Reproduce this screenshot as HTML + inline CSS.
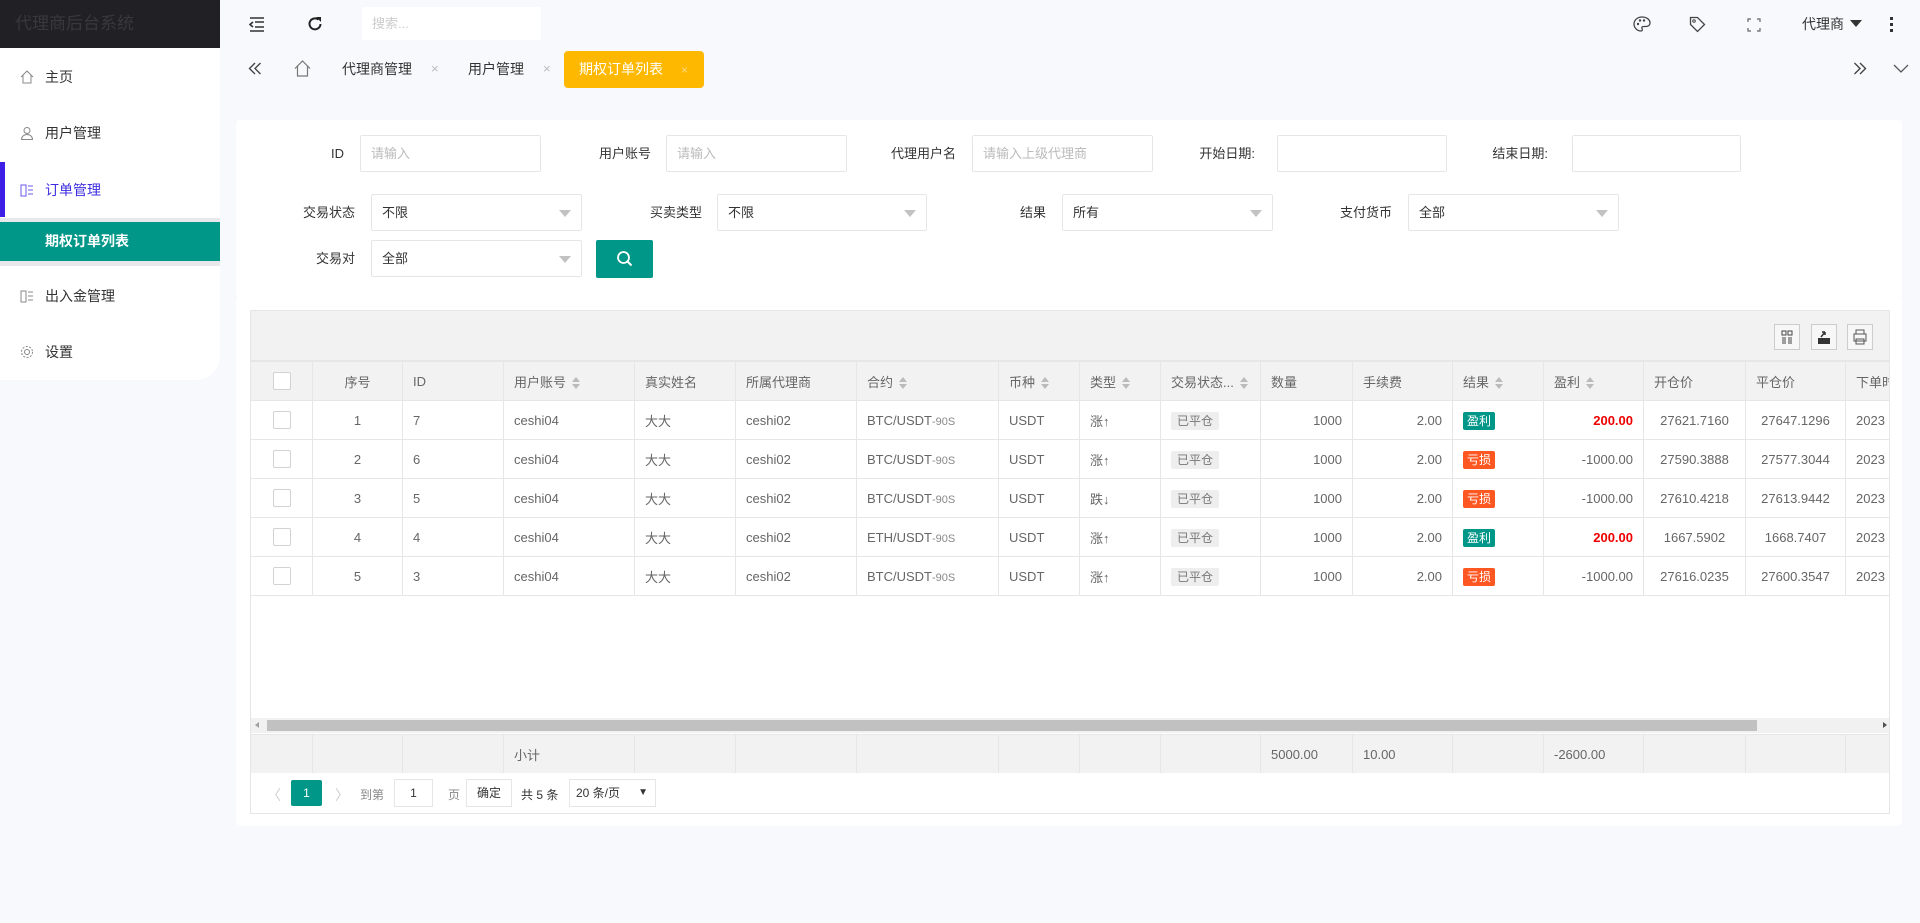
<!DOCTYPE html>
<html><head><meta charset="utf-8"><style>
*{box-sizing:border-box;margin:0;padding:0}
body{width:1920px;height:923px;overflow:hidden;background:#f8f9fc;font-family:"Liberation Sans","Noto Sans CJK SC",sans-serif;font-size:14px;color:#333;position:relative}
.abs{position:absolute}
.side{left:0;top:0;width:220px;height:380px;background:#fff;border-bottom-right-radius:24px}
.logo{left:0;top:0;width:220px;height:48px;background:#212025;color:#38383d;font-size:17px;line-height:48px;padding-left:15px}
.mi{left:0;width:220px;height:40px;line-height:40px;padding-left:45px;color:#333;font-size:14px}
.mi svg{position:absolute;left:20px;top:13px}
.inp{background:#fff;border:1px solid #e6e6e6;border-radius:2px;height:37px;line-height:35px;padding-left:10px;color:#bbb;font-size:13px}
.sel{color:#333}
.sel:after{content:"";position:absolute;right:10px;top:15px;border:6px solid transparent;border-top:7px solid #c2c2c2}
.lbl{text-align:right;color:#333;font-size:13px;line-height:37px}
table{border-collapse:collapse;table-layout:fixed}
td{border:1px solid #e6e6e6;height:39px;padding:0 10px;color:#666;font-size:13px;white-space:nowrap;overflow:hidden}
.hd td{background:#f2f2f2;color:#666}
.c{text-align:center}.r{text-align:right}
.cb{display:inline-block;width:18px;height:18px;border:1px solid #d2d2d2;background:#fff;border-radius:2px;vertical-align:middle}
.st{background:#eee;color:#777;font-size:12px;padding:2px 6px;border-radius:2px}
.bg{color:#fff;font-size:12px;padding:2px 4px;border-radius:2px}
.sort{display:inline-block;margin-left:6px;vertical-align:middle;width:8px;height:12px;position:relative}
.sort:before{content:"";position:absolute;left:0;top:0;border:4px solid transparent;border-bottom:5px solid #bbb;border-top:0}
.sort:after{content:"";position:absolute;left:0;top:7px;border:4px solid transparent;border-top:5px solid #bbb;border-bottom:0}
.red{color:#e00;font-weight:bold}
.tb{width:26px;height:26px;border:1px solid #ccc;background:#f7f7f7}
</style></head><body>
<div class="abs side"></div>
<div class="abs logo">代理商后台系统</div>
<div class="abs mi" style="top:57px"><svg width="14" height="14" viewBox="0 0 14 14"><path d="M1 7L7 1l6 6M3 5v8h8V5" fill="none" stroke="#888"/></svg>主页</div>
<div class="abs mi" style="top:113px"><svg width="14" height="14" viewBox="0 0 14 14"><circle cx="7" cy="4.5" r="3" fill="none" stroke="#888"/><path d="M1.5 13.5c0-3 2.5-5 5.5-5s5.5 2 5.5 5z" fill="none" stroke="#888"/></svg>用户管理</div>
<div class="abs" style="left:0;top:162px;width:5px;height:55px;background:#3d1ee6"></div>
<div class="abs mi" style="top:170px;color:#3d2ce0"><svg width="14" height="14" viewBox="0 0 14 14"><path d="M1 2h5v11H1zM8 3h5M8 7h5M8 11h5" fill="none" stroke="#6a5ae8"/></svg>订单管理</div>
<div class="abs" style="left:0;top:218px;width:220px;height:48px;background:#e8e8ec"></div>
<div class="abs mi" style="top:222px;height:39px;line-height:39px;background:#009688;color:#fff;font-weight:bold">期权订单列表</div>
<div class="abs mi" style="top:276px"><svg width="14" height="14" viewBox="0 0 14 14"><path d="M1 2h5v11H1zM8 3h5M8 7h5M8 11h5" fill="none" stroke="#888"/></svg>出入金管理</div>
<div class="abs mi" style="top:332px"><svg width="14" height="14" viewBox="0 0 14 14"><circle cx="7" cy="7" r="2.5" fill="none" stroke="#888"/><circle cx="7" cy="7" r="5.5" fill="none" stroke="#888" stroke-dasharray="2 1.5"/></svg>设置</div>

<svg class="abs" style="left:249px;top:17px" width="16" height="15" viewBox="0 0 16 15"><path d="M1 1h14M6 5h9M6 10h9M1 14h14M4 5L1 7.5 4 10" fill="none" stroke="#333" stroke-width="1.6"/></svg>
<svg class="abs" style="left:307px;top:16px" width="16" height="16" viewBox="0 0 16 16"><path d="M13.5 8A5.5 5.5 0 1 1 11.5 3.6" fill="none" stroke="#222" stroke-width="2"/><path d="M9 1h5v5z" fill="#222"/></svg>
<div class="abs" style="left:362px;top:7px;width:179px;height:33px;background:#fff;color:#ccc;font-size:13px;line-height:33px;padding-left:10px">搜索...</div>
<svg class="abs" style="left:1633px;top:16px" width="18" height="16" viewBox="0 0 18 16"><path d="M9 1C4 1 1 4.5 1 8s3 7 7 7c1.5 0 1.5-1.5 1-2.5s0-2 1.5-2H13c2.5 0 4-1.5 4-3.5C17 3.5 13.5 1 9 1z" fill="none" stroke="#444" stroke-width="1.3"/><circle cx="5" cy="8" r="1.2" fill="#444"/><circle cx="7" cy="4.5" r="1.2" fill="#444"/><circle cx="11" cy="4.5" r="1.2" fill="#444"/></svg>
<svg class="abs" style="left:1689px;top:16px" width="17" height="17" viewBox="0 0 17 17"><path d="M1.5 1.5h7l7 7-7 7-7-7z" fill="none" stroke="#444" stroke-width="1.3"/><circle cx="5" cy="5" r="1.3" fill="none" stroke="#444"/></svg>
<svg class="abs" style="left:1747px;top:18px" width="14" height="14" viewBox="0 0 14 14"><path d="M1 4V1h3M10 1h3v3M13 10v3h-3M4 13H1v-3" fill="none" stroke="#666" stroke-width="1.2"/></svg>
<div class="abs" style="left:1802px;top:13px;font-size:14px;color:#333;line-height:22px">代理商</div>
<div class="abs" style="left:1850px;top:20px;border:6px solid transparent;border-top:7px solid #333"></div>
<div class="abs" style="left:1890px;top:17px;width:4px;line-height:5px;font-size:0"><i style="display:block;width:3px;height:3px;background:#333;margin-bottom:3px"></i><i style="display:block;width:3px;height:3px;background:#333;margin-bottom:3px"></i><i style="display:block;width:3px;height:3px;background:#333"></i></div>

<svg class="abs" style="left:248px;top:62px" width="14" height="13" viewBox="0 0 14 13"><path d="M7 1L1.5 6.5 7 12M12.5 1L7 6.5l5.5 5.5" fill="none" stroke="#444" stroke-width="1.4"/></svg>
<svg class="abs" style="left:294px;top:60px" width="17" height="17" viewBox="0 0 17 17"><path d="M1 8.5L8.5 1 16 8.5M3.5 6v10h10V6" fill="none" stroke="#777" stroke-width="1.2"/></svg>
<div class="abs" style="left:342px;top:59px;color:#333;font-size:14px">代理商管理</div>
<div class="abs" style="left:431px;top:61px;color:#bbb;font-size:13px">×</div>
<div class="abs" style="left:468px;top:59px;color:#333;font-size:14px">用户管理</div>
<div class="abs" style="left:543px;top:61px;color:#bbb;font-size:13px">×</div>
<div class="abs" style="left:564px;top:51px;width:140px;height:37px;background:#ffb800;border-radius:4px;color:#fff;font-size:14px;line-height:37px;padding-left:15px">期权订单列表<span style="margin-left:18px;color:#ffd980;font-size:12px">×</span></div>
<svg class="abs" style="left:1853px;top:62px" width="14" height="13" viewBox="0 0 14 13"><path d="M1.5 1L7 6.5 1.5 12M7 1l5.5 5.5L7 12" fill="none" stroke="#444" stroke-width="1.4"/></svg>
<svg class="abs" style="left:1893px;top:64px" width="16" height="10" viewBox="0 0 16 10"><path d="M1 1l7 7 7-7" fill="none" stroke="#555" stroke-width="1.3"/></svg>

<div class="abs" style="left:236px;top:120px;width:1666px;height:178px;background:#fff;border-radius:4px"></div>
<div class="abs lbl" style="left:240px;top:135px;width:104px">ID</div>
<div class="abs inp" style="left:360px;top:135px;width:181px">请输入</div>
<div class="abs lbl" style="left:560px;top:135px;width:91px">用户账号</div>
<div class="abs inp" style="left:666px;top:135px;width:181px">请输入</div>
<div class="abs lbl" style="left:860px;top:135px;width:96px">代理用户名</div>
<div class="abs inp" style="left:972px;top:135px;width:181px">请输入上级代理商</div>
<div class="abs lbl" style="left:1160px;top:135px;width:95px">开始日期:</div>
<div class="abs inp" style="left:1277px;top:135px;width:170px"></div>
<div class="abs lbl" style="left:1450px;top:135px;width:98px">结束日期:</div>
<div class="abs inp" style="left:1572px;top:135px;width:169px"></div>

<div class="abs lbl" style="left:260px;top:194px;width:95px">交易状态</div>
<div class="abs inp sel" style="left:371px;top:194px;width:211px">不限</div>
<div class="abs lbl" style="left:600px;top:194px;width:102px">买卖类型</div>
<div class="abs inp sel" style="left:717px;top:194px;width:210px">不限</div>
<div class="abs lbl" style="left:950px;top:194px;width:96px">结果</div>
<div class="abs inp sel" style="left:1062px;top:194px;width:211px">所有</div>
<div class="abs lbl" style="left:1290px;top:194px;width:102px">支付货币</div>
<div class="abs inp sel" style="left:1408px;top:194px;width:211px">全部</div>

<div class="abs lbl" style="left:260px;top:240px;width:95px">交易对</div>
<div class="abs inp sel" style="left:371px;top:240px;width:211px">全部</div>
<div class="abs" style="left:596px;top:240px;width:57px;height:38px;background:#009688;border-radius:2px"></div>
<svg class="abs" style="left:616px;top:250px" width="18" height="18" viewBox="0 0 18 18"><circle cx="7.5" cy="7.5" r="5.5" fill="none" stroke="#fff" stroke-width="1.8"/><path d="M11.5 11.5l4 4" stroke="#fff" stroke-width="2"/></svg>

<div class="abs" style="left:236px;top:298px;width:1666px;height:528px;background:#fff;border-radius:0 0 6px 6px"></div>
<div class="abs" style="left:250px;top:310px;width:1640px;height:504px;border:1px solid #e6e6e6;background:#fff;overflow:hidden">
 <div style="height:50px;background:#f2f2f2;border-bottom:1px solid #e6e6e6;position:relative">
  <div class="abs tb" style="left:1523px;top:13px"><svg width="24" height="24" viewBox="0 0 24 24"><path d="M7 6h4v4H7zM13 6h4v4h-4zM8 12v7M10 12v7M14 12v7M16 12v7" fill="none" stroke="#444"/></svg></div>
  <div class="abs tb" style="left:1560px;top:13px"><svg width="24" height="24" viewBox="0 0 24 24"><path d="M6 13h12v6H6z" fill="#333"/><path d="M9 12l4-5M13 7h-3M13 7v3" fill="none" stroke="#333" stroke-width="1.5"/></svg></div>
  <div class="abs tb" style="left:1596px;top:13px"><svg width="24" height="24" viewBox="0 0 24 24"><path d="M8 9V5h8v4M6 9h12v7H6zM8 14h8v5H8z" fill="none" stroke="#555"/></svg></div>
 </div>
 <table style="width:1800px;margin-left:-1px">
  <colgroup><col style="width:62px"><col style="width:90px"><col style="width:101px"><col style="width:131px"><col style="width:101px"><col style="width:121px"><col style="width:142px"><col style="width:81px"><col style="width:81px"><col style="width:100px"><col style="width:92px"><col style="width:100px"><col style="width:91px"><col style="width:100px"><col style="width:102px"><col style="width:100px"><col style="width:205px"></colgroup>
  <tr class="hd"><td class="c"><span class="cb"></span></td><td class="c">序号</td><td>ID</td><td>用户账号<span class="sort"></span></td><td>真实姓名</td><td>所属代理商</td><td>合约<span class="sort"></span></td><td>币种<span class="sort"></span></td><td>类型<span class="sort"></span></td><td>交易状态...<span class="sort"></span></td><td>数量</td><td>手续费</td><td>结果<span class="sort"></span></td><td>盈利<span class="sort"></span></td><td>开仓价</td><td>平仓价</td><td>下单时间</td></tr>
  <tr><td class="c"><span class="cb"></span></td><td class="c">1</td><td>7</td><td>ceshi04</td><td>大大</td><td>ceshi02</td><td>BTC/USDT<span style="font-size:11px;color:#888">-90S</span></td><td>USDT</td><td>涨↑</td><td><span class="st">已平仓</span></td><td class="r">1000</td><td class="r">2.00</td><td><span class="bg" style="background:#009688">盈利</span></td><td class="r red">200.00</td><td class="c">27621.7160</td><td class="c">27647.1296</td><td>2023</td></tr>
  <tr><td class="c"><span class="cb"></span></td><td class="c">2</td><td>6</td><td>ceshi04</td><td>大大</td><td>ceshi02</td><td>BTC/USDT<span style="font-size:11px;color:#888">-90S</span></td><td>USDT</td><td>涨↑</td><td><span class="st">已平仓</span></td><td class="r">1000</td><td class="r">2.00</td><td><span class="bg" style="background:#ff5722">亏损</span></td><td class="r">-1000.00</td><td class="c">27590.3888</td><td class="c">27577.3044</td><td>2023</td></tr>
  <tr><td class="c"><span class="cb"></span></td><td class="c">3</td><td>5</td><td>ceshi04</td><td>大大</td><td>ceshi02</td><td>BTC/USDT<span style="font-size:11px;color:#888">-90S</span></td><td>USDT</td><td>跌↓</td><td><span class="st">已平仓</span></td><td class="r">1000</td><td class="r">2.00</td><td><span class="bg" style="background:#ff5722">亏损</span></td><td class="r">-1000.00</td><td class="c">27610.4218</td><td class="c">27613.9442</td><td>2023</td></tr>
  <tr><td class="c"><span class="cb"></span></td><td class="c">4</td><td>4</td><td>ceshi04</td><td>大大</td><td>ceshi02</td><td>ETH/USDT<span style="font-size:11px;color:#888">-90S</span></td><td>USDT</td><td>涨↑</td><td><span class="st">已平仓</span></td><td class="r">1000</td><td class="r">2.00</td><td><span class="bg" style="background:#009688">盈利</span></td><td class="r red">200.00</td><td class="c">1667.5902</td><td class="c">1668.7407</td><td>2023</td></tr>
  <tr><td class="c"><span class="cb"></span></td><td class="c">5</td><td>3</td><td>ceshi04</td><td>大大</td><td>ceshi02</td><td>BTC/USDT<span style="font-size:11px;color:#888">-90S</span></td><td>USDT</td><td>涨↑</td><td><span class="st">已平仓</span></td><td class="r">1000</td><td class="r">2.00</td><td><span class="bg" style="background:#ff5722">亏损</span></td><td class="r">-1000.00</td><td class="c">27616.0235</td><td class="c">27600.3547</td><td>2023</td></tr>
 </table>
 <div class="abs" style="left:0;top:407px;width:1640px;height:15px;background:#f1f1f1">
  <div class="abs" style="left:16px;top:2px;width:1490px;height:11px;background:#c1c1c1"></div>
  <div class="abs" style="left:4px;top:4px;border:3px solid transparent;border-right:4px solid #a0a0a0;border-left:0"></div>
  <div class="abs" style="right:4px;top:4px;border:3px solid transparent;border-left:4px solid #505050;border-right:0"></div>
 </div>
 <table class="abs" style="left:-1px;top:423px;width:1800px">
  <colgroup><col style="width:62px"><col style="width:90px"><col style="width:101px"><col style="width:131px"><col style="width:101px"><col style="width:121px"><col style="width:142px"><col style="width:81px"><col style="width:81px"><col style="width:100px"><col style="width:92px"><col style="width:100px"><col style="width:91px"><col style="width:100px"><col style="width:102px"><col style="width:100px"><col style="width:205px"></colgroup>
  <tr class="hd"><td></td><td></td><td></td><td>小计</td><td></td><td></td><td></td><td></td><td></td><td></td><td>5000.00</td><td>10.00</td><td></td><td>-2600.00</td><td></td><td></td><td></td></tr>
 </table>
 <div class="abs" style="left:0;top:462px;width:1640px;height:42px;background:#fff;font-size:12px;color:#666">
  <span class="abs" style="left:16px;top:12px;color:#ccc;font-size:14px">〈</span>
  <span class="abs" style="left:40px;top:7px;width:31px;height:26px;background:#009688;color:#fff;text-align:center;line-height:26px;border-radius:2px">1</span>
  <span class="abs" style="left:84px;top:12px;color:#ccc;font-size:14px">〉</span>
  <span class="abs" style="left:109px;top:13px;color:#888">到第</span>
  <span class="abs" style="left:143px;top:6px;width:39px;height:28px;border:1px solid #e6e6e6;text-align:center;line-height:26px;color:#333">1</span>
  <span class="abs" style="left:197px;top:13px;color:#888">页</span>
  <span class="abs" style="left:215px;top:6px;width:46px;height:28px;border:1px solid #e6e6e6;text-align:center;line-height:26px;color:#333">确定</span>
  <span class="abs" style="left:270px;top:13px;color:#333">共 5 条</span>
  <span class="abs" style="left:318px;top:6px;width:87px;height:28px;border:1px solid #e6e6e6;line-height:26px;padding-left:6px;color:#333">20 条/页<span style="position:absolute;right:7px;top:0;font-size:10px">▼</span></span>
 </div>
</div>
</body></html>
